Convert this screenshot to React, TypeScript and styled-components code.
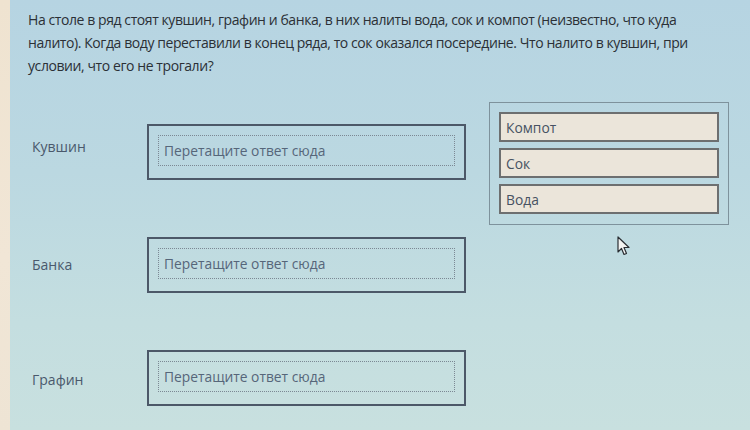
import styled, { createGlobalStyle } from "styled-components";

const GlobalStyle = createGlobalStyle`
  html, body {
    margin: 0;
    padding: 0;
  }
  body {
    width: 750px;
    height: 430px;
    overflow: hidden;
    font-family: "Open Sans", "Liberation Sans", sans-serif;
  }
`;

const Page = styled.div`
  display: flex;
  width: 750px;
  height: 430px;
  position: relative;
`;

const Strip = styled.div`
  width: 10px;
  flex-shrink: 0;
  background: linear-gradient(180deg, #efe3d0, #f1e6d6 60%, #eee4d4);
`;

const Screen = styled.div`
  flex: 1;
  padding: 8px 0 0 18px;
  background: linear-gradient(180deg, #b6d4e2 0%, #bbd8e1 40%, #c4dee0 75%, #c8e0df 100%);
`;

const Question = styled.p`
  margin: 0;
  white-space: nowrap;
  font-size: 14px;
  line-height: 23px;
  letter-spacing: -0.42px;
  color: #2b3036;
`;

const Body = styled.div`
  display: flex;
  align-items: flex-start;
  margin-top: 25px;
`;

const Targets = styled.div`
  display: flex;
  flex-direction: column;
  gap: 57px;
  padding: 22px 0 0 4px;
  width: 461px;
`;

const Row = styled.div`
  display: flex;
  align-items: center;
`;

const Label = styled.div<{ $shift: number }>`
  width: 115px;
  font-size: 14px;
  color: #4a596c;
  margin-top: ${(p) => p.$shift}px;
`;

const DropOuter = styled.div`
  box-sizing: border-box;
  width: 319px;
  height: 56px;
  border: 2px solid #4c5868;
  padding: 9px 9px 0 9px;
`;

const DropInner = styled.div`
  box-sizing: border-box;
  height: 31px;
  border: 1px dotted #7c8894;
  padding: 0 5px;
  display: flex;
  align-items: center;
  font-size: 13.8px;
  color: #56667a;
`;

const Source = styled.div`
  box-sizing: border-box;
  width: 240px;
  margin-left: -4px;
  border: 1px solid #7e929c;
  padding: 9px 9px 10px 9px;
  display: flex;
  flex-direction: column;
  gap: 6px;
`;

const Answer = styled.div`
  box-sizing: border-box;
  height: 30px;
  border: 2px solid #6d6f70;
  background: #ebe5da;
  padding: 0 5px;
  display: flex;
  align-items: center;
  font-size: 13.8px;
  color: #475262;
`;

const Cursor = styled.svg`
  position: absolute;
  left: 617px;
  top: 236px;
`;

const targets = [
  { name: "Кувшин", shift: -12 },
  { name: "Банка", shift: -2 },
  { name: "Графин", shift: 2 },
];
const answers = ["Компот", "Сок", "Вода"];

function App() {
  return (
    <>
      <GlobalStyle />
      <Page>
        <Strip />
        <Screen>
          <Question>
            На столе в ряд стоят кувшин, графин и банка, в них налиты вода, сок
            и компот (неизвестно, что куда
            <br />
            налито). Когда воду переставили в конец ряда, то сок оказался
            посередине. Что налито в кувшин, при
            <br />
            условии, что его не трогали?
          </Question>
          <Body>
            <Targets>
              {targets.map((t) => (
                <Row key={t.name}>
                  <Label $shift={t.shift}>{t.name}</Label>
                  <DropOuter>
                    <DropInner>Перетащите ответ сюда</DropInner>
                  </DropOuter>
                </Row>
              ))}
            </Targets>
            <Source>
              {answers.map((a) => (
                <Answer key={a}>{a}</Answer>
              ))}
            </Source>
          </Body>
        </Screen>
        <Cursor width="14" height="21" viewBox="0 0 14 21">
          <path
            d="M1 1 L1 16 L4.5 12.5 L7 18.5 L9.5 17.5 L7 11.5 L12 11.5 Z"
            fill="#f4f4f2"
            stroke="#2a2e33"
            strokeWidth="1.2"
            strokeLinejoin="round"
          />
        </Cursor>
      </Page>
    </>
  );
}

export default App;
